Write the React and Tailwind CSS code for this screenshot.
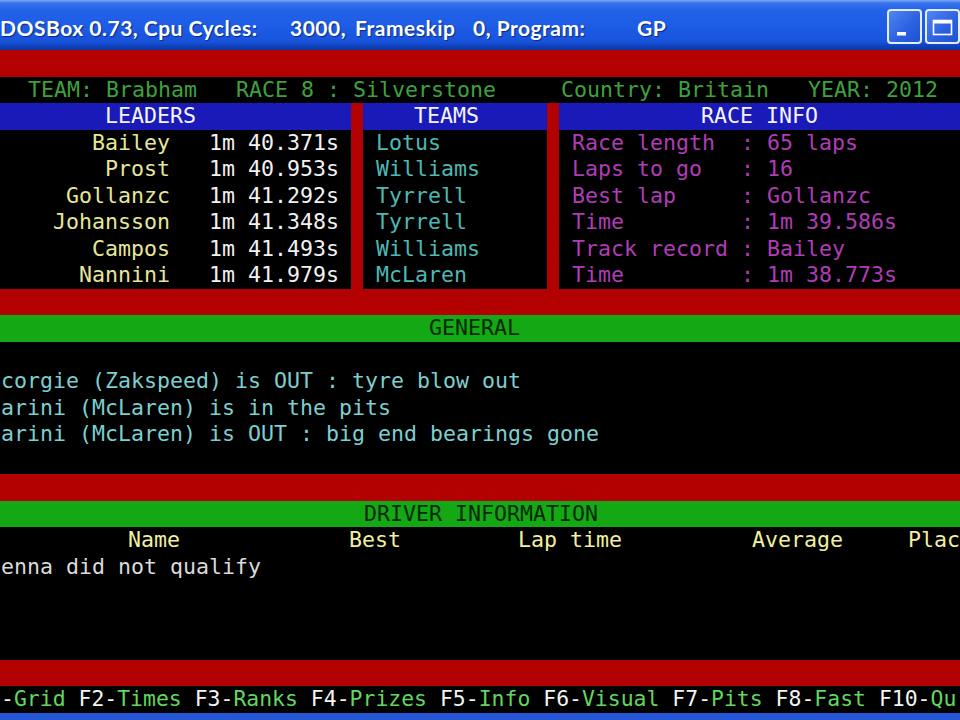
import React from "react";

const place = (segs) => {
  let s = "";
  for (const [c, t] of segs) {
    while (s.length < c) s += " ";
    s += t;
  }
  return s;
};

const mono =
  "font-['DejaVu_Sans_Mono',monospace] text-[21.6px] leading-[26.5px] whitespace-pre";

function Line({ className = "", pad = "", children }) {
  return (
    <div className={`h-[26.5px] overflow-hidden ${className}`}>
      <div className={`${mono} ${pad}`}>{children}</div>
    </div>
  );
}

const leaders = [
  ["Bailey", "1m 40.371s"],
  ["Prost", "1m 40.953s"],
  ["Gollanzc", "1m 41.292s"],
  ["Johansson", "1m 41.348s"],
  ["Campos", "1m 41.493s"],
  ["Nannini", "1m 41.979s"],
];

const teams = ["Lotus", "Williams", "Tyrrell", "Tyrrell", "Williams", "McLaren"];

const raceInfo = [
  ["Race length", "65 laps"],
  ["Laps to go", "16"],
  ["Best lap", "Gollanzc"],
  ["Time", "1m 39.586s"],
  ["Track record", "Bailey"],
  ["Time", "1m 38.773s"],
];

const general = [
  "corgie (Zakspeed) is OUT : tyre blow out",
  "arini (McLaren) is in the pits",
  "arini (McLaren) is OUT : big end bearings gone",
];

const keys = [
  ["-", "Grid"],
  [" F2-", "Times"],
  [" F3-", "Ranks"],
  [" F4-", "Prizes"],
  [" F5-", "Info"],
  [" F6-", "Visual"],
  [" F7-", "Pits"],
  [" F8-", "Fast"],
  [" F10-", "Qu"],
];

function TitleBar() {
  return (
    <div className="h-[50px] flex bg-[linear-gradient(to_bottom,#7aaaf6_0px,#3a74ec_3px,#2262e8_10px,#1c5ae4_30px,#1853da_42px,#0e3db4_47px,#0c38a8_50px)]">
      <div className="flex items-center pt-[6px] text-white font-['Lato',sans-serif] font-bold text-[21px] tracking-[0.5px] whitespace-pre [text-shadow:1px_1px_1px_#0a2a80]">
        <span className="w-[290px]">DOSBox 0.73, Cpu Cycles:</span>
        <span className="w-[65px]">3000,</span>
        <span className="w-[118px]">Frameskip</span>
        <span className="w-[164px]">0, Program:</span>
        <span>GP</span>
      </div>
      <div className="ml-auto flex gap-[3px] pt-[9px]">
        <div className="w-[35px] h-[35px] rounded-[4px] border-2 border-[#e4ecfc] bg-[linear-gradient(135deg,#4f86f2,#2a5fe0_60%,#2053d4)] flex">
          <svg width="31" height="31" viewBox="0 0 31 31">
            <rect x="8" y="21" width="9" height="3.5" fill="#ffffff" />
          </svg>
        </div>
        <div className="w-[35px] h-[35px] rounded-[4px] border-2 border-[#e4ecfc] bg-[linear-gradient(135deg,#4f86f2,#2a5fe0_60%,#2053d4)] flex">
          <svg width="31" height="31" viewBox="0 0 31 31">
            <rect x="6.5" y="9.5" width="18" height="14" fill="none" stroke="#ffffff" strokeWidth="1.6" />
            <rect x="6.5" y="9" width="18" height="3.5" fill="#ffffff" />
          </svg>
        </div>
      </div>
    </div>
  );
}

export default function App() {
  return (
    <div className="w-[960px] h-[720px] overflow-hidden bg-black">
      <TitleBar />

      {/* row 0 */}
      <div className="h-[26.5px] bg-[#b30000]" />

      {/* row 1 */}
      <Line className="bg-black text-[#3da23d]" pad="pl-[28px]">
        {place([
          [0, "TEAM: Brabham"],
          [16, "RACE 8 : Silverstone"],
          [41, "Country: Britain"],
          [60, "YEAR: 2012"],
        ])}
      </Line>

      {/* row 2 header */}
      <div className="h-[26.5px] flex text-[#f4f4ff]">
        <div className="w-[351px] bg-[#1a1ab8] overflow-hidden">
          <div className={`${mono} pl-[105px]`}>LEADERS</div>
        </div>
        <div className="w-[12px] bg-[#b30000]" />
        <div className="w-[184px] bg-[#1a1ab8] overflow-hidden">
          <div className={`${mono} pl-[51px]`}>TEAMS</div>
        </div>
        <div className="w-[12px] bg-[#b30000]" />
        <div className="flex-1 bg-[#1a1ab8] overflow-hidden">
          <div className={`${mono} text-center`}>RACE INFO</div>
        </div>
      </div>

      {/* rows 3-8 */}
      <div className="h-[159px] flex">
        <div className="w-[351px] bg-black overflow-hidden">
          {leaders.map(([n, t], i) => (
            <div key={i} className={`${mono} h-[26.5px] flex`}>
              <span className="w-[170px] text-right text-[#e6e69a]">{n}</span>
              <span className="ml-[39px] text-[#f2f2f2]">{t}</span>
            </div>
          ))}
        </div>
        <div className="w-[12px] bg-[#b30000]" />
        <div className="w-[184px] bg-black overflow-hidden">
          {teams.map((t, i) => (
            <div key={i} className={`${mono} pl-[13px] h-[26.5px] text-[#4db8b4]`}>
              {t}
            </div>
          ))}
        </div>
        <div className="w-[12px] bg-[#b30000]" />
        <div className="flex-1 bg-black overflow-hidden">
          {raceInfo.map(([l, v], i) => (
            <div key={i} className={`${mono} pl-[13px] h-[26.5px] text-[#b03cb6]`}>
              {l.padEnd(13) + ": " + v}
            </div>
          ))}
        </div>
      </div>

      {/* row 9 */}
      <div className="h-[26.5px] bg-[#b30000]" />
      {/* row 10 */}
      <Line className="bg-[#14a814] text-[#062a06]" pad="pl-[429px]">GENERAL</Line>

      {/* rows 11-15 */}
      <Line className="bg-black" />
      {general.map((g, i) => (
        <Line key={i} className="bg-black text-[#7ccfd0]" pad="pl-[1px]">
          {g}
        </Line>
      ))}
      <Line className="bg-black" />

      {/* row 16 */}
      <div className="h-[26.5px] bg-[#b30000]" />
      {/* row 17 */}
      <Line className="bg-[#14a814] text-[#062a06]" pad="pl-[364px]">DRIVER INFORMATION</Line>
      {/* row 18 */}
      <Line className="bg-black text-[#f0f0a0]" pad="pl-[128px]">
        {place([
          [0, "Name"],
          [17, "Best"],
          [30, "Lap time"],
          [48, "Average"],
          [60, "Plac"],
        ])}
      </Line>
      {/* row 19 */}
      <Line className="bg-black text-[#dadada]" pad="pl-[1px]">enna did not qualify</Line>
      {/* rows 20-22 */}
      <Line className="bg-black" />
      <Line className="bg-black" />
      <Line className="bg-black" />
      {/* row 23 */}
      <div className="h-[26.5px] bg-[#b30000]" />
      {/* row 24 */}
      <div className="h-[26.5px] overflow-hidden bg-black">
        <div className="font-['DejaVu_Sans_Mono',monospace] text-[21.45px] leading-[26.5px] whitespace-pre pl-[1px]">
          {keys.map(([k, l], i) => (
            <React.Fragment key={i}>
              <span className="text-[#f4f4f4]">{k}</span>
              <span className="text-[#5fd85f]">{l}</span>
            </React.Fragment>
          ))}
        </div>
      </div>
      <div className="h-[7.5px] bg-[#2456d6]" />
    </div>
  );
}
